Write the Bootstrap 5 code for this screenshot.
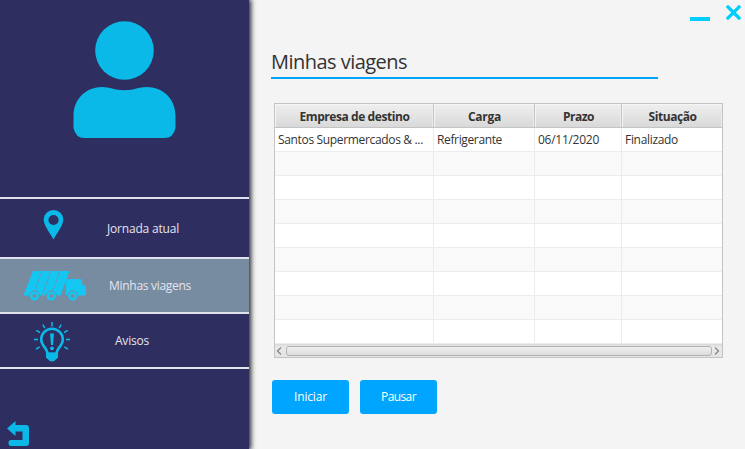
<!DOCTYPE html>
<html lang="pt-BR">
<head>
<meta charset="utf-8">
<meta name="viewport" content="width=device-width, initial-scale=1">
<title>Minhas viagens</title>
<link href="https://cdn.jsdelivr.net/npm/bootstrap@5.3.0/dist/css/bootstrap.min.css" rel="stylesheet">
<style>
body{font:12px/16px "Open Sans","Noto Sans",sans-serif;color:#333;background:#f4f4f4;height:449px}
.side{width:249px;background:#2e2e60;box-shadow:1px 0 5px 1px #222;z-index:1}
.profile{height:197px;padding:20px 2px 0 0}
.entry{border:0;border-top:2px solid #e2e2ef;background:none;color:#e4e4ee;height:55px;padding:0;text-align:left;width:249px}
.entry.first{height:60px}
.entry.first .t{padding-top:2px}
.entry.end{border-bottom:2px solid #e2e2ef;height:57px}
.entry.chosen{background:#778ca1}
.entry svg,.profile svg,.back svg{fill:#0ab9e8;flex:none}
.entry.chosen svg{fill:#14c7f2}
.back{margin:52px 0 0 7px}
.content-area{padding:0 3px 0 22px}
.winbar{height:26px;padding-top:5px}
.heading{font-size:20px;line-height:30px;width:387px;height:53px;padding-top:21px;border-bottom:2px solid #00a5ff;margin:0}
.grid-box{width:449px;height:255px;border:1px solid #c4c4c4;margin:24px 0 0 3px;background:#fff}
.grid-box table{table-layout:fixed;width:447px;border-collapse:separate;border-spacing:0}
.grid-box th{height:24px;padding:3px 0 0 1px;text-align:center;background:linear-gradient(#efefef,#d9d9d9);border-right:1px solid #c4c4c4;border-bottom:1px solid #c4c4c4;box-shadow:inset 1px 1px #f5f5f5,inset -1px 0 #ececec}
.grid-box td{height:24px;padding:0 0 0 3px;border-right:1px solid #ececec;border-bottom:1px solid #ececec;white-space:nowrap}
.grid-box th:last-child,.grid-box td:last-child{border-right:0}
.grid-box tbody tr:nth-child(even){background:#f9f9f9}
.scroller{height:13px;background:linear-gradient(#d8d8d8,#e9e9e9 3px,#e4e4e4)}
.thumb{width:426px;height:10px;border:1px solid #b2b2b2;border-radius:3px;background:linear-gradient(#efefef,#dcdcdc)}
.actions{gap:11px;padding:22px 0 0 1px}
.action{width:77px;height:34px;background:#00a5ff;color:#fff;border:0;border-radius:3px;font-size:12px;line-height:16px;padding:0}
.t{display:inline-block;white-space:nowrap}
</style>
</head>
<body class="d-flex overflow-hidden">
<aside class="side d-flex flex-column flex-shrink-0">
  <div class="profile d-flex justify-content-center align-items-start">
    <svg width="104" height="120" viewBox="0 0 104 120"><circle cx="52.500" cy="30.500" r="29.300"/><path d="M1.500 96C1.500 78 15 67 30 67c8 0 12 3.200 22.500 3.200S66 67 75 67c15 0 28.500 11 28.500 29v12q-2 10-11 10h-80q-9 0-11-10Z"/></svg>
  </div>
  <nav class="d-flex flex-column">
    <button class="entry first d-flex align-items-center">
      <svg width="107" height="58" viewBox="0 199 107 58"><path fill-rule="evenodd" d="M53.500 210a9.800 9.800 0 0 1 9.800 9.800c0 5-5.300 12-9.800 19.700-4.500-7.700-9.800-14.700-9.800-19.700A9.800 9.800 0 0 1 53.500 210Zm0 4.900a5.100 5.100 0 1 0 0 10.200 5.100 5.100 0 0 0 0-10.200Z"/></svg>
      <span class="t" data-w="71">Jornada atual</span>
    </button>
    <button class="entry chosen d-flex align-items-center">
      <svg width="109" height="53" viewBox="0 259 109 53">
        <path d="M33 271h36.500l-9 24.500H23.500Z"/><path d="M68 279h12q2 0 2 2v3.500h1.500q2.500 1.500 2.500 3.500v6l-1.500 1.500H66V281q0-2 2-2Z"/>
        <path d="M42 271l-9 24.500M51 271l-9 24.500M60 271l-9 24.500" stroke="#778ca1" stroke-width=".8" stroke-dasharray="7 1"/>
        <g stroke="#778ca1" stroke-width="1"><circle cx="34.500" cy="296" r="5"/><circle cx="51.300" cy="296" r="5"/><circle cx="72.700" cy="296" r="5"/></g>
        <g style="fill:#778ca1"><circle cx="34.500" cy="296" r="2.100"/><circle cx="51.300" cy="296" r="2.100"/><circle cx="72.700" cy="296" r="2.100"/></g>
      </svg>
      <span class="t" data-w="81">Minhas viagens</span>
    </button>
    <button class="entry end d-flex align-items-center">
      <svg width="115" height="53" viewBox="0 314 115 53">
        <path d="M46 352.500h12v5l-3.500 3.200q-2.500 1.600-5 0L46 357.500Z"/>
        <g fill="none" stroke="#0ab9e8"><path stroke-width="2.600" d="M47.500 354c0-6-6.300-8-6.300-14.500a10.800 10.800 0 0 1 21.600 0c0 6.500-6.300 8.500-6.300 14.500Z"/>
        <path stroke-width="1.500" d="M52 322v4.500M42.800 324.500l2 3.700M61.200 324.500l-2 3.700M36.200 330.300l3.700 2.200M67.800 330.300l-3.700 2.200M34 339.500h4M66 339.500h4M36 349l3.700-2.200M68 349l-3.700-2.200"/></g>
        <path d="M50 333.500h4l-1 11.500h-2Z"/><circle cx="52" cy="348.300" r="1.900"/>
      </svg>
      <span class="t" data-w="33">Avisos</span>
    </button>
  </nav>
  <div class="back"><svg class="d-block" width="24" height="26" viewBox="0 0 24 26"><path d="M0 7.500 8.500 0v4H19q3 0 3 3v15q0 3-3 3H4q-2.500 0-2.500-3t2.500-3h11.500v-8.500h-7V15Z"/></svg></div>
</aside>
<main class="content-area flex-grow-1">
  <div class="winbar d-flex justify-content-end">
    <svg width="53" height="17" viewBox="689 5 53 17"><path fill="#00ceff" d="M690 17h20v4h-20z"/><path d="M728 7l11 11M739 7l-11 11" fill="none" stroke="#00ceff" stroke-width="3.200" stroke-linecap="square"/></svg>
  </div>
  <h1 class="heading fw-normal"><span class="t" data-w="135">Minhas viagens</span></h1>
  <div class="grid-box">
    <table>
      <colgroup><col style="width:159px"><col style="width:101px"><col style="width:87px"><col style="width:100px"></colgroup>
      <thead><tr><th><span class="t" data-w="109">Empresa de destino</span></th><th><span class="t" data-w="32">Carga</span></th><th><span class="t" data-w="30">Prazo</span></th><th><span class="t" data-w="47">Situação</span></th></tr></thead>
      <tbody>
        <tr><td><span class="t" data-w="144">Santos Supermercados &amp; ...</span></td><td><span class="t" data-w="64">Refrigerante</span></td><td><span class="t" data-w="60">06/11/2020</span></td><td><span class="t" data-w="52">Finalizado</span></td></tr>
        <tr><td></td><td></td><td></td><td></td></tr><tr><td></td><td></td><td></td><td></td></tr>
        <tr><td></td><td></td><td></td><td></td></tr><tr><td></td><td></td><td></td><td></td></tr>
        <tr><td></td><td></td><td></td><td></td></tr><tr><td></td><td></td><td></td><td></td></tr>
        <tr><td></td><td></td><td></td><td></td></tr><tr><td></td><td></td><td></td><td></td></tr>
      </tbody>
    </table>
    <div class="scroller d-flex align-items-center justify-content-between">
      <svg width="11" height="13" fill="none" stroke="#888" stroke-width="1.300"><path d="M6 3.500 2.500 7 6 10.500"/></svg>
      <div class="thumb"></div>
      <svg width="10" height="13" fill="none" stroke="#888" stroke-width="1.300"><path d="M3 3.500 6.500 7 3 10.500"/></svg>
    </div>
  </div>
  <div class="actions d-flex">
    <button class="action"><span class="t" data-w="32">Iniciar</span></button>
    <button class="action"><span class="t" data-w="34">Pausar</span></button>
  </div>
</main>
<script src="https://cdn.jsdelivr.net/npm/bootstrap@5.3.0/dist/js/bootstrap.bundle.min.js"></script>
<script>
/* Tracks each label to its design width. */
document.querySelectorAll('[data-w]').forEach(function(e){
  var w=e.getBoundingClientRect().width,n=e.textContent.length,s=(e.dataset.w-w+1)/n;
  e.style.letterSpacing=s+'px';
});
</script>
</body>
</html>
